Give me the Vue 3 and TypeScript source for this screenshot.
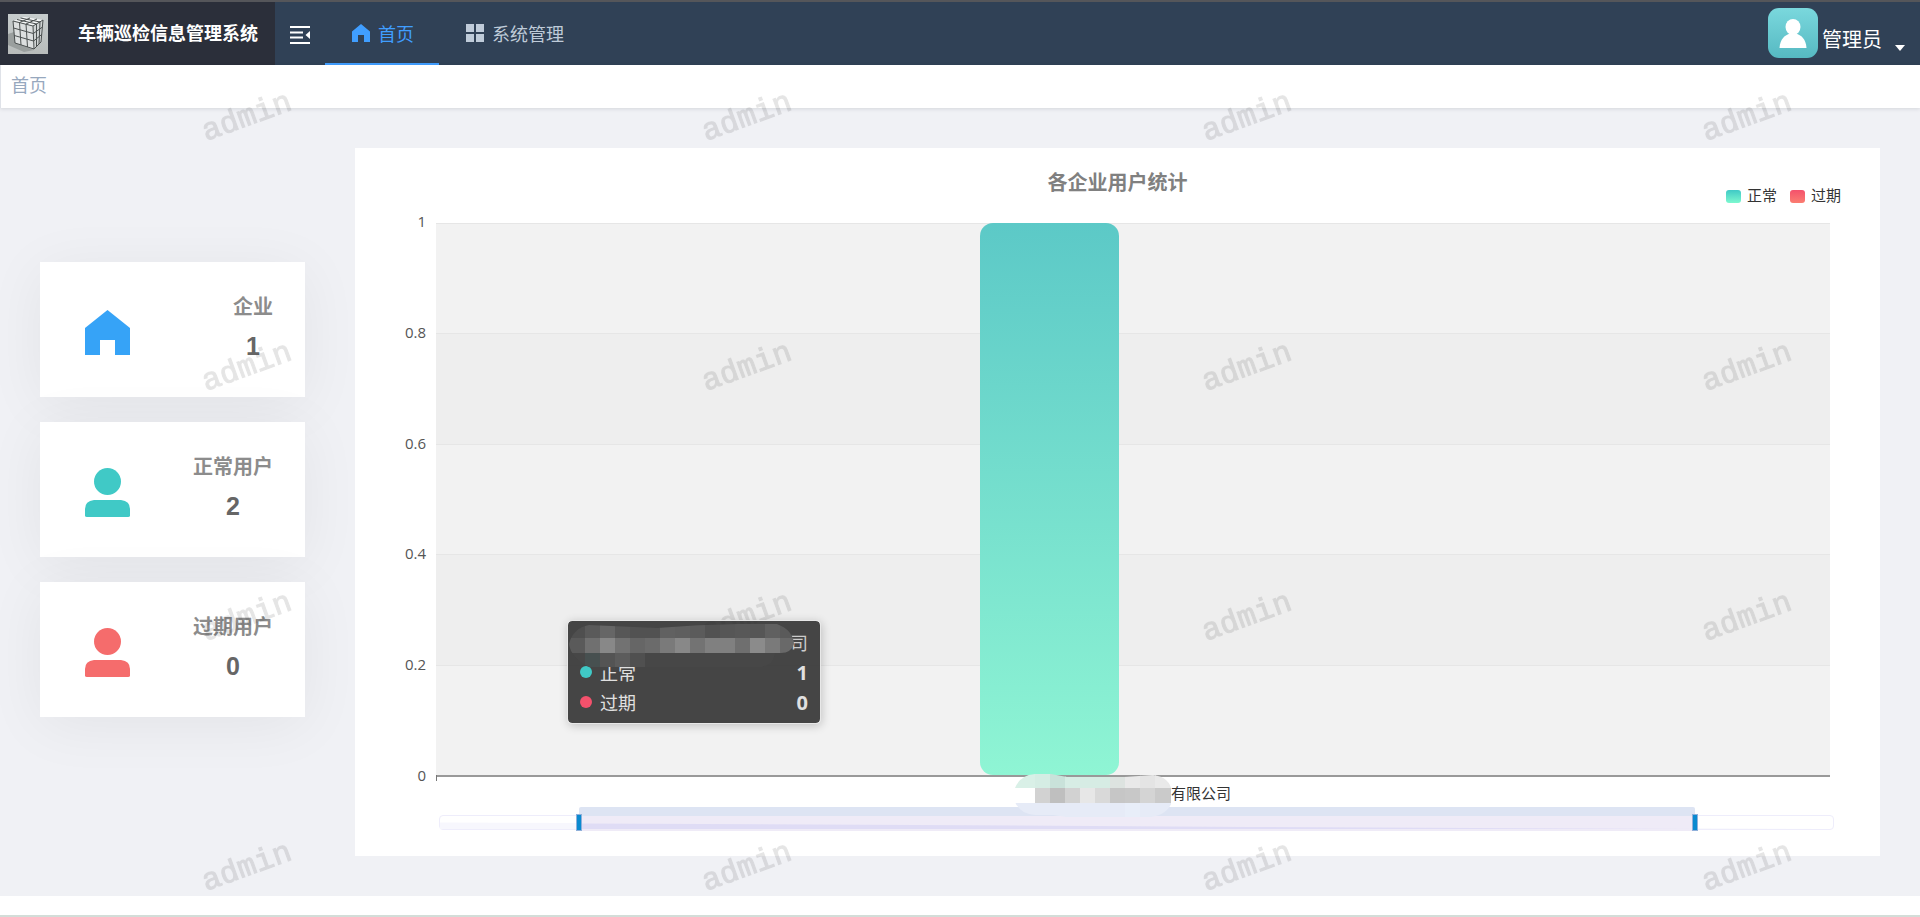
<script setup lang="ts">
import { computed, ref } from 'vue'

interface StatCard {
  label: string
  value: number
  icon: 'house' | 'user'
  tone: 'blue' | 'teal' | 'red'
}

interface Series {
  name: string
  value: number
  tone: 'teal' | 'red'
}

const cards: StatCard[] = [
  { label: '企业', value: 1, icon: 'house', tone: 'blue' },
  { label: '正常用户', value: 2, icon: 'user', tone: 'teal' },
  { label: '过期用户', value: 0, icon: 'user', tone: 'red' },
]

const series: Series[] = [
  { name: '正常', value: 1, tone: 'teal' },
  { name: '过期', value: 0, tone: 'red' },
]

const ticks = ['1', '0.8', '0.6', '0.4', '0.2']

const rangeStart = ref(10)
const rangeEnd = ref(90)
const selection = computed(() => ({
  left: `${rangeStart.value}%`,
  right: `${100 - rangeEnd.value}%`,
}))

const axisMask: string[][] = [
  ['#d9f0e7', '#d9f0e7', '#d5ede4', '#c9e2da', '#d7ede5', '#d6ece4', '#d6ece4', '#dde3e0', '#e9e9e9', '#e4e4e4', '#e9e9e9'],
  ['#ffffff', '#ffffff', '#d2d2d2', '#bfbfbf', '#d2d2d2', '#e7e7e7', '#d9d9d9', '#c6c6c6', '#c8c8c8', '#d4d4d4', '#cacaca'],
  ['#e6ebf7', '#e6ebf7', '#e6ebf7', '#e6ebf7', '#e6ebf7', '#e6ebf7', '#e6ebf7', '#e6ebf7', '#e8eef9', '#e6ebf7', '#e6ebf7'],
]

const tipMask: string[][] = [
  ['#4f4f4f', '#4f4f4f', '#5a5a5a', '#666666', '#575757', '#525252', '#525252', '#616161', '#5f5f5f', '#5b5b5b', '#525252', '#565656', '#585858', '#565656', '#606060', '#5a5a5a'],
  ['#5a5a5a', '#5a5a5a', '#707070', '#888888', '#727272', '#666666', '#6b6b6b', '#7a7a7a', '#888888', '#737373', '#808080', '#808080', '#6f6f6f', '#8b8b8b', '#7a7a7a', '#696969'],
  ['#474747', '#474747', '#475050', '#545454', '#5c5c5c', '#505050', '#474747', '#474747', '#474747', '#474747', '#474747', '#474747', '#474747', '#474747', '#474747', '#474747'],
]
</script>

<template>
  <div class="page">
    <header class="topbar">
      <div class="brand">
        <svg class="logo" viewBox="0 0 40 40" aria-hidden="true">
          <defs>
            <linearGradient id="logoBg" x1="0" y1="0" x2="0" y2="1">
              <stop offset="0" stop-color="#c6cccc" />
              <stop offset="1" stop-color="#b8bcbb" />
            </linearGradient>
          </defs>
          <rect width="40" height="40" fill="url(#logoBg)" />
          <path d="M0 20 6 18 7 29 26 36 16 38 0 31Z" fill="#9a9f9e" />
          <path d="M5 7 16 3 35 6 25 12Z" fill="#f4f6f6" />
          <path d="M5 7 25 12 26 35 7 29Z" fill="#dcdfdf" />
          <path d="M25 12 35 6 33 28 26 35Z" fill="#cfd3d3" />
          <path
            d="M9 5.500 28.500 10M12.500 4 32 8M11.500 8.500 22 4M18 10 29 5M5 7 25 12 35 6M5.500 14 25.300 19.500 34.500 13M6.300 21.500 25.600 27 33.700 20.500M7 29 26 35 33 28M5 7 7 29M11.500 8.500 13 31M18 10 19.500 33M25 12 26 35M28.500 10V32.500M32 8 31 30M35 6 33 28"
            fill="none" stroke="#4a4f4f" stroke-width="1"
          />
        </svg>
        <h1 class="brand-name">车辆巡检信息管理系统</h1>
      </div>
      <button class="fold" type="button" aria-label="折叠菜单">
        <svg viewBox="0 0 20 18" width="20" height="18">
          <path d="M0 1H20M0 6.500H13M0 11.500H13M0 17H20" stroke="#fff" stroke-width="2" fill="none" />
          <path d="M20 5V13L15.500 9Z" fill="#fff" />
        </svg>
      </button>
      <nav class="menu">
        <a class="menu-item active" href="#home">
          <svg viewBox="0 0 22 22"><path d="M11 2 20 9.500V20H14V13H8V20H2V9.500Z" fill="currentColor" /></svg>
          <span>首页</span>
        </a>
        <a class="menu-item" href="#system">
          <svg viewBox="0 0 22 22">
            <path d="M2 2H10V10H2ZM12 2H20V10H12ZM2 12H10V20H2ZM12 12H20V20H12Z" fill="currentColor" />
          </svg>
          <span>系统管理</span>
        </a>
      </nav>
      <button class="account" type="button">
        <svg class="avatar" viewBox="0 0 50 50" aria-hidden="true">
          <defs>
            <linearGradient id="avatarBg" x1="0" y1="0" x2="0" y2="1">
              <stop offset="0" stop-color="#7ad8dd" />
              <stop offset="1" stop-color="#56b9c2" />
            </linearGradient>
          </defs>
          <rect width="50" height="50" rx="11" fill="url(#avatarBg)" />
          <ellipse cx="25" cy="19" rx="7.500" ry="8" fill="#fff" />
          <path d="M11.500 40C12 31 17 27 22 25.500H28C33 27 38 31 38.500 40Z" fill="#fff" />
        </svg>
        <span class="account-name">管理员</span>
        <svg class="caret" viewBox="0 0 10 6" aria-hidden="true"><path d="M0 0H10L5 6Z" fill="#fff" /></svg>
      </button>
    </header>

    <div class="crumbs"><a href="#home">首页</a></div>

    <main class="content">
      <section class="cards">
        <article v-for="card in cards" :key="card.label" class="card">
          <svg class="card-icon" :class="card.tone" viewBox="0 0 46 50" aria-hidden="true">
            <path v-if="card.icon === 'house'" d="M22.500 2 45 20V47H30V32H15V47H0V20Z" fill="currentColor" />
            <template v-else>
              <circle cx="22.500" cy="13.500" r="13.500" fill="currentColor" />
              <path d="M9 32H36Q45 33 45 41V47.500Q45 49 43 49H2Q0 49 0 47.500V41Q0 33 9 32Z" fill="currentColor" />
            </template>
          </svg>
          <div class="card-text">
            <span class="card-label">{{ card.label }}</span>
            <strong class="card-value">{{ card.value }}</strong>
          </div>
        </article>
      </section>

      <section class="panel">
        <div class="panel-head">
          <h2 class="panel-title">各企业用户统计</h2>
          <ul class="legend">
            <li v-for="s in series" :key="s.name"><i class="swatch" :class="s.tone"></i>{{ s.name }}</li>
          </ul>
        </div>

        <div class="chart">
          <div class="scale">
            <span v-for="t in ticks" :key="t" class="tick"><b>{{ t }}</b></span>
            <span class="tick last"><b>0</b></span>
          </div>
          <div class="plot">
            <div v-for="t in ticks" :key="t" class="band"></div>
            <div class="bar" :style="{ height: `${series[0].value * 100}%` }"></div>
            <div class="tooltip">
              <div class="tip-row tip-title">
                <svg class="tip-mask" viewBox="0 0 225 43" aria-hidden="true">
                  <defs>
                    <clipPath id="tipClip">
                      <path d="M0 20Q4 4 20 1L88 4Q150 -1 208 0Q224 6 225 20Q222 29 212 29H206Q204 43 190 43H20Q2 34 0 20Z" />
                    </clipPath>
                  </defs>
                  <g clip-path="url(#tipClip)">
                    <template v-for="(row, r) in tipMask" :key="r">
                      <rect v-for="(c, i) in row" :key="i" :x="i * 15 - 14" :y="r * 15 - 1" width="15" height="15" :fill="c" shape-rendering="crispEdges" />
                    </template>
                  </g>
                </svg>
                <span>司</span>
              </div>
              <div v-for="s in series" :key="s.name" class="tip-row">
                <i class="dot" :class="s.tone"></i>
                <span>{{ s.name }}</span>
                <strong>{{ s.value }}</strong>
              </div>
            </div>
          </div>
        </div>

        <div class="axis-label">
          <span class="mask-slot">
            <svg class="axis-mask" viewBox="0 0 157 44" aria-hidden="true">
              <defs>
                <clipPath id="axisClip">
                  <path d="M0 14Q5 1 20 0H36L52 3H110L138 1Q155 3 157 18V28Q152 41 136 43H52L38 41H20Q5 40 0 28Z" />
                </clipPath>
              </defs>
              <g clip-path="url(#axisClip)">
                <template v-for="(row, r) in axisMask" :key="r">
                  <rect v-for="(c, i) in row" :key="i" :x="i * 15 - 10" :y="r * 15 - 1" width="16" height="15" :fill="c" shape-rendering="crispEdges" />
                </template>
              </g>
            </svg>
          </span>
          <span>有限公司</span>
        </div>

        <div class="zoomer">
          <div class="track"></div>
          <svg class="shadow" viewBox="0 0 100 8" preserveAspectRatio="none" aria-hidden="true">
            <path d="M0 0.500 10 1 50 4 90 7 100 8H0Z" fill="#f7f7fd" />
          </svg>
          <div class="selected" :style="selection">
            <svg viewBox="0 0 100 8" preserveAspectRatio="none" aria-hidden="true">
              <path d="M0 1.500 30 3 60 5 100 7V7H0Z" fill="#dfdcf5" />
            </svg>
          </div>
          <input v-model.number="rangeStart" class="range" type="range" min="0" max="100" aria-label="起始位置" />
          <input v-model.number="rangeEnd" class="range" type="range" min="0" max="100" aria-label="结束位置" />
        </div>
      </section>
    </main>

    <footer class="foot"></footer>

    <svg class="watermark" aria-hidden="true">
      <defs>
        <pattern id="mark" width="500" height="250" patternUnits="userSpaceOnUse">
          <text class="mark-text" transform="translate(206 76) rotate(-20)">admin</text>
        </pattern>
      </defs>
      <rect width="100%" height="100%" fill="url(#mark)" />
    </svg>
  </div>
</template>

<style>
body {
  margin: 0;
}
</style>

<style scoped>
.page {
  position: relative;
  display: flex;
  flex-direction: column;
  min-height: 100vh;
  background: #fff;
  font-family: "Liberation Sans", "Noto Sans CJK SC", sans-serif;
  font-size: 18px;
  color: #333;
}

a {
  color: inherit;
  text-decoration: none;
}

button {
  padding: 0;
  border: 0;
  background: none;
  font: inherit;
  color: inherit;
  cursor: pointer;
}

.topbar {
  display: flex;
  align-items: stretch;
  height: 63px;
  border-top: 2px solid #55565a;
  background: #304156;
  color: #fff;
}

.brand {
  display: flex;
  align-items: center;
  gap: 30px;
  box-sizing: border-box;
  width: 275px;
  padding-left: 8px;
  background: #2b2f3a;
}

.logo {
  width: 40px;
  height: 40px;
}

.brand-name {
  margin: 0;
  font-size: 18px;
  line-height: 24px;
  white-space: nowrap;
}

.fold {
  display: flex;
  align-items: center;
  justify-content: center;
  width: 50px;
  padding-top: 2px;
}

.menu {
  display: flex;
}

.menu-item {
  display: flex;
  align-items: center;
  gap: 6px;
  padding: 0 25px;
  border-bottom: 2px solid transparent;
  color: #bfcbd9;
}

.menu-item svg {
  width: 22px;
  height: 22px;
}

.menu-item.active {
  border-color: #409eff;
  color: #409eff;
}

.account {
  display: flex;
  align-items: flex-end;
  height: 50px;
  margin: 6px 15px 0 auto;
}

.avatar {
  width: 50px;
  height: 50px;
}

.account-name {
  margin: 0 13px 3px 4px;
  font-size: 20px;
  line-height: 30px;
}

.caret {
  width: 10px;
  height: 6px;
  margin-bottom: 7px;
}

.crumbs {
  position: relative;
  height: 43px;
  padding-left: 10px;
  border-left: 1px solid #dfe2e8;
  background: #fff;
  box-shadow: 0 1px 4px rgba(0, 21, 41, 0.12);
  line-height: 42px;
  color: #97a8be;
}

.content {
  display: flex;
  flex: 1;
  gap: 50px;
  padding: 40px;
  background: #f0f1f5;
}

.cards {
  display: flex;
  flex-direction: column;
  justify-content: center;
  gap: 25px;
  width: 265px;
  padding-bottom: 25px;
}

.card {
  display: flex;
  justify-content: space-between;
  box-sizing: border-box;
  height: 135px;
  padding: 30px 32px 0 45px;
  background: #fff;
  box-shadow: 0 8px 60px rgba(0, 0, 0, 0.06);
}

.card-icon {
  width: 46px;
  height: 50px;
  margin-top: 16px;
}

.card-icon.blue {
  color: #36a3f7;
}

.card-icon.teal {
  color: #40c9c6;
}

.card-icon.red {
  color: #f56c6c;
}

.card-text {
  display: flex;
  flex-direction: column;
  align-items: center;
  gap: 9px;
}

.card-label {
  font-size: 20px;
  font-weight: 700;
  line-height: 30px;
  color: #8c8c8c;
}

.card-value {
  font-size: 25px;
  line-height: 30px;
  color: #666;
}

.panel {
  display: flex;
  flex: 1;
  flex-direction: column;
  min-width: 0;
  padding-bottom: 25px;
  background: #fff;
}

.panel-head {
  display: grid;
  grid-template-columns: 1fr auto 1fr;
  align-items: start;
  box-sizing: border-box;
  height: 75px;
  padding: 21px 39px 0;
}

.panel-title {
  grid-column: 2;
  margin: 0;
  font-size: 20px;
  line-height: 28px;
  color: #808080;
}

.legend {
  display: flex;
  justify-content: flex-end;
  gap: 13px;
  margin: 16px 0 0;
  padding: 0;
  list-style: none;
  font-size: 15px;
  line-height: 22px;
}

.legend li {
  display: flex;
  align-items: center;
  gap: 6px;
}

.swatch {
  width: 15px;
  height: 13px;
  border-radius: 3px;
}

.swatch.teal {
  background: linear-gradient(#40c9c6, #7df8cf);
}

.swatch.red {
  background: linear-gradient(#f4516c, #fb7d71);
}

.chart {
  display: grid;
  flex: 1;
  grid-template-columns: 81px 1fr;
  min-height: 400px;
  padding-right: 50px;
}

.scale,
.plot {
  display: flex;
  flex-direction: column;
}

.tick {
  flex: 1;
  padding-right: 10px;
  text-align: right;
}

.tick b {
  display: block;
  margin-top: -13px;
  font-family: "Open Sans", "Noto Sans CJK SC", sans-serif;
  font-size: 15px;
  font-weight: 400;
  line-height: 22px;
  color: #555;
}

.tick.last {
  flex: 0 0 0;
  height: 0;
}

.plot {
  position: relative;
  border-bottom: 2px solid #999;
}

.plot::after {
  content: "";
  position: absolute;
  top: 100%;
  left: 0;
  width: 1px;
  height: 6px;
  background: #777;
}

.band {
  flex: 1;
  border-top: 1px solid #e6e6e6;
  background: #f2f2f2;
}

.band:nth-child(even) {
  background: #eee;
}

.bar {
  position: absolute;
  bottom: 0;
  left: 39%;
  width: 10%;
  border-radius: 13px;
  background: linear-gradient(#5cc9c7, #8ff5d4);
}

.tooltip {
  position: absolute;
  z-index: 2;
  top: 397px;
  left: 131px;
  box-sizing: border-box;
  width: 254px;
  padding: 6px 12px;
  border: 1px solid #e8e8e8;
  border-radius: 5px;
  background: rgba(50, 50, 50, 0.9);
  background-clip: padding-box;
  box-shadow: 1px 2px 10px rgba(0, 0, 0, 0.2);
  color: #e0e0e0;
}

.tip-row {
  display: flex;
  align-items: center;
  gap: 8px;
  height: 30px;
}

.tip-row strong {
  margin-left: auto;
  font-family: "Open Sans", sans-serif;
  font-size: 20px;
}

.tip-title {
  position: relative;
  justify-content: flex-end;
  color: #ccc;
}

.tip-mask {
  position: absolute;
  top: -3px;
  left: -11px;
  width: 225px;
  height: 43px;
}

.dot {
  width: 12px;
  height: 12px;
  border-radius: 50%;
}

.dot.teal {
  background: #40c9c6;
}

.dot.red {
  background: #f4516c;
}

.axis-label {
  position: relative;
  z-index: 1;
  display: flex;
  align-items: center;
  justify-content: center;
  height: 30px;
  padding: 0 50px 0 81px;
  font-size: 15px;
}

.mask-slot {
  position: relative;
  align-self: stretch;
  width: 136px;
}

.axis-mask {
  position: absolute;
  top: -3px;
  left: -20px;
  width: 157px;
  height: 44px;
}

.zoomer {
  position: relative;
  height: 24px;
  margin: 0 46px 0 84px;
}

.track {
  position: absolute;
  inset: 8px 0 1px;
  border: 1px solid #eeedfb;
  border-radius: 4px;
}

.shadow {
  position: absolute;
  bottom: 2px;
  left: 1px;
  width: 100%;
  height: 7px;
}

.selected {
  position: absolute;
  top: 0;
  bottom: 0;
  border-radius: 2px 2px 0 0;
  background: linear-gradient(#dde4f3 9px, #efebf7 9px);
}

.selected svg {
  position: absolute;
  bottom: 1px;
  left: 0;
  width: 100%;
  height: 8px;
}

.range {
  position: absolute;
  top: 7px;
  left: -3px;
  width: calc(100% + 6px);
  height: 17px;
  margin: 0;
  appearance: none;
  background: none;
  pointer-events: none;
}

.range::-webkit-slider-thumb {
  box-sizing: border-box;
  width: 6px;
  height: 17px;
  border: 1px solid #8fb0da;
  appearance: none;
  background: #0a8ad0;
  pointer-events: auto;
}

.foot {
  height: 19px;
  border-bottom: 2px solid #d3ddd8;
}

.watermark {
  position: absolute;
  z-index: 1;
  top: 65px;
  left: 0;
  width: 100%;
  height: calc(100% - 65px);
  pointer-events: none;
}

.mark-text {
  font-family: "Liberation Mono", monospace;
  font-size: 31px;
  fill: #000;
  stroke: #000;
  stroke-width: 1px;
  opacity: 0.1;
}
</style>
